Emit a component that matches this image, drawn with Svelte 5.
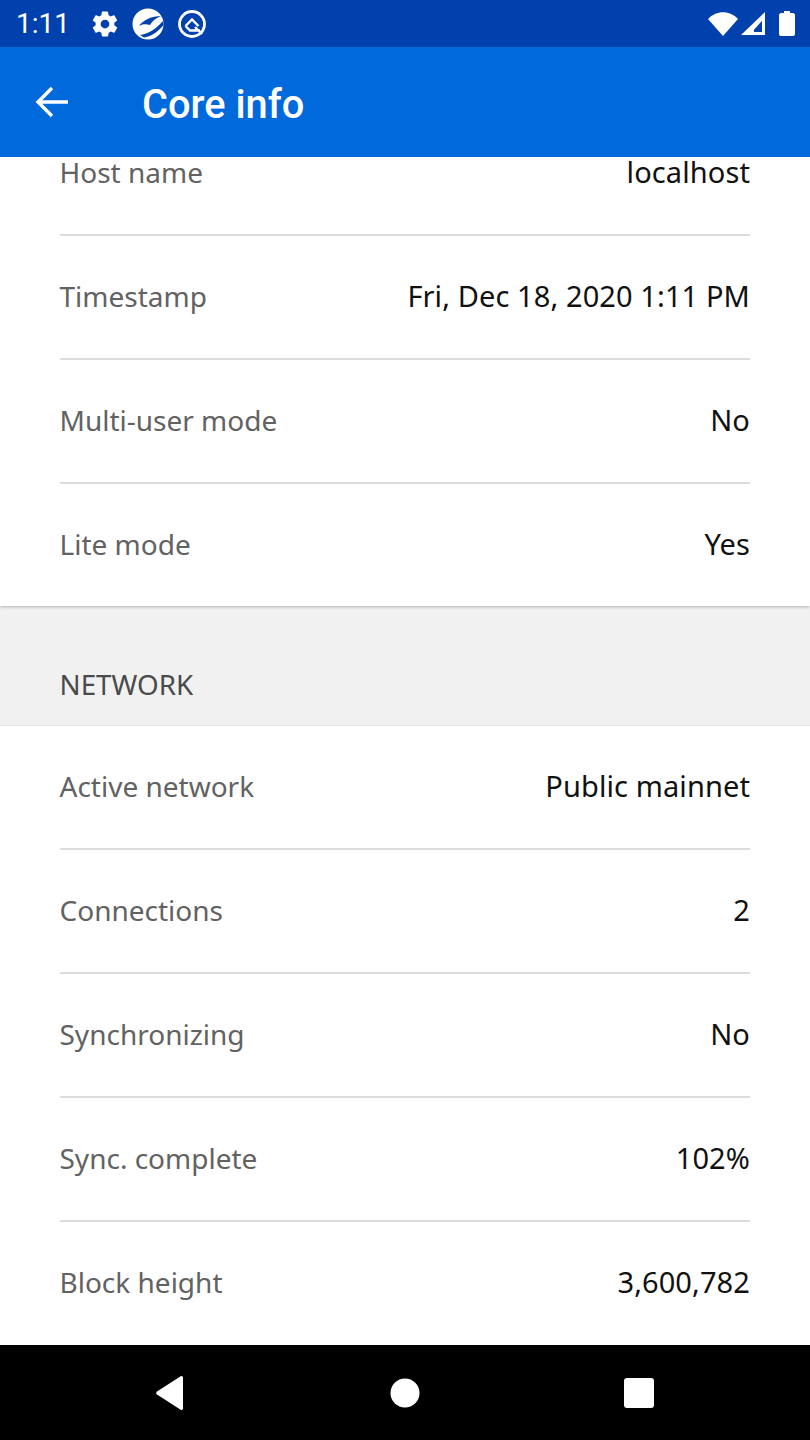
<script>
	const general = [
		['Timestamp', 'Fri, Dec 18, 2020 1:11 PM'],
		['Multi-user mode', 'No'],
		['Lite mode', 'Yes']
	];
	const network = [
		['Active network', 'Public mainnet'],
		['Connections', '2'],
		['Synchronizing', 'No'],
		['Sync. complete', '102%'],
		['Block height', '3,600,782']
	];
</script>

<div class="screen">
	<div class="status">
		<span class="time">1:11</span>
		<svg class="gear" width="30" height="30" viewBox="0 0 24 24" fill="#fff"><path fill-rule="evenodd" d="M19.4 13c.04-.3.1-.65.1-1s-.06-.7-.1-1l2.1-1.65c.2-.15.25-.42.12-.64l-2-3.46c-.12-.22-.4-.3-.6-.22l-2.5 1c-.5-.4-1.1-.7-1.7-1l-.4-2.65A.5.5 0 0 0 14 2h-4a.5.5 0 0 0-.5.42l-.37 2.65c-.63.25-1.17.6-1.7 1l-2.48-1a.5.5 0 0 0-.6.22l-2 3.46c-.13.22-.07.49.12.64L4.57 11c-.04.3-.07.65-.07 1s.03.7.07 1l-2.1 1.65a.5.5 0 0 0-.12.64l2 3.46c.12.22.4.3.6.22l2.48-1c.53.4 1.07.75 1.7 1l.37 2.65c.04.24.25.42.5.42h4c.25 0 .46-.18.5-.42l.37-2.65c.63-.25 1.17-.6 1.7-1l2.5 1c.2.08.48 0 .6-.22l2-3.46a.5.5 0 0 0-.12-.64zM12 15.500a3.500 3.500 0 1 1 0-7 3.500 3.500 0 0 1 0 7z"/></svg>
		<svg class="logo" width="32" height="32" viewBox="0 0 32 32"><circle cx="16" cy="16" r="15.500" fill="#fff"/><path d="M7 18C11 12 20 8 29 8C24 10 20 13 18 17C14 15.500 10 16 7 18Z" fill="#0041ad"/><path d="M8 27C16 26 24 21 31 13L31.500 17C26 24 18 29 12 29.500Z" fill="#0041ad"/></svg>
		<svg class="q" width="30" height="30" viewBox="0 0 30 30" fill="none" stroke="#fff"><circle cx="15" cy="15" r="12.500" stroke-width="2.800"/><path d="M8.500 17 15 10.500 21.500 17M8.500 17l4.500 4.500h10M18 18l7 7" stroke-width="2.400"/></svg>
		<span class="spacer"></span>
		<svg class="wifi" width="30" height="24" viewBox="0 0 30 24" fill="#fff"><path d="M0 7C8-2 22-2 30 7L15 24z"/></svg>
		<svg class="signal" width="24" height="23" viewBox="0 0 24 23" fill="#fff"><path fill-rule="evenodd" d="M24 0v23H0zM21 9l-8 9v2h8z"/><path d="M21 9l-8 9v2h8z" fill="#0041ad"/></svg>
		<svg class="battery" width="16" height="25" viewBox="0 0 16 25" fill="#fff"><path d="M5 0h6v2h3c1 0 2 1 2 2v19c0 1-1 2-2 2H2c-1 0-2-1-2-2V4c0-1 1-2 2-2h3z"/></svg>
	</div>
	<header class="bar">
		<svg width="33" height="32" viewBox="0 0 33 32" fill="none" stroke="#fff" stroke-width="3.400"><path d="M33 16H3M17 2 3 16l14 14"/></svg>
		<h1>Core info</h1>
	</header>
	<main class="content">
		<section class="card">
			<div class="row first">
				<span class="label">Host name</span>
				<span class="value">localhost</span>
			</div>
			{#each general as [label, value], i}
				<div class="row" class:last={i === general.length - 1}>
					<span class="label">{label}</span>
					<span class="value">{value}</span>
				</div>
			{/each}
		</section>
		<div class="section-head">NETWORK</div>
		<section class="card net">
			{#each network as [label, value], i}
				<div class="row" class:last={i === network.length - 1}>
					<span class="label">{label}</span>
					<span class="value">{value}</span>
				</div>
			{/each}
		</section>
	</main>
	<nav class="navbar">
		<svg width="30" height="34" viewBox="0 0 30 34" fill="#fff"><path d="M28 1.500V32.500a1.500 1.500 0 0 1-2.300 1.200L2 18.500a1.800 1.800 0 0 1 0-3L25.700.3A1.500 1.500 0 0 1 28 1.500z"/></svg>
		<svg width="30" height="30" viewBox="0 0 30 30" fill="#fff"><circle cx="15" cy="15" r="14.500"/></svg>
		<svg width="30" height="30" viewBox="0 0 30 30" fill="#fff"><rect width="30" height="30" rx="3"/></svg>
	</nav>
</div>

<style>
	:global(body) {
		margin: 0;
	}

	.screen {
		width: 810px;
		height: 1440px;
		display: flex;
		flex-direction: column;
		overflow: hidden;
		font-family: 'Noto Sans', 'Open Sans', sans-serif;
		background: #fff;
	}

	.status {
		height: 47px;
		flex: none;
		background: #0041ad;
		display: flex;
		align-items: center;
		padding: 0 15px 0 16px;
		box-sizing: border-box;
		color: #fff;
		font-family: Roboto, sans-serif;
	}

	.time {
		font-size: 28px;
		width: 74px;
	}

	.gear {
		margin-right: 12px;
	}

	.logo {
		margin-right: 13px;
	}

	.spacer {
		flex: 1;
	}

	.wifi {
		margin-right: 3px;
	}

	.signal {
		margin-right: 14px;
	}

	.bar {
		height: 110px;
		flex: none;
		background: #0069dc;
		display: flex;
		align-items: center;
		padding-left: 35px;
		gap: 74px;
		color: #fff;
		font-family: Roboto, sans-serif;
	}

	h1 {
		margin: 5px 0 0;
		font-size: 39.8px;
		font-weight: 500;
		line-height: 48px;
	}

	.content {
		flex: 1;
		min-height: 0;
		overflow: hidden;
		background: #fff;
	}

	.card {
		position: relative;
		background: #fff;
		padding: 0 60px 0 59.5px;
		box-shadow: 0 1px 3px rgba(0, 0, 0, 0.25);
	}

	.card.net {
		box-shadow: none;
	}

	.row {
		padding-bottom: 2px;
		box-sizing: border-box;
		height: 124px;
		display: flex;
		justify-content: space-between;
		align-items: center;
		border-bottom: 2px solid #dcdcdc;
		font-size: 28px;
		line-height: 40px;
	}

	.row.first {
		height: 79px;
		padding-bottom: 0;
		align-items: flex-start;
		line-height: 30px;
	}

	.row.last {
		height: 122px;
		padding-bottom: 3px;
		border-bottom: 0;
	}

	.label {
		color: #626262;
	}

	.value {
		color: #111;
		font-size: 29px;
		letter-spacing: 0.1px;
	}

	.section-head {
		height: 120px;
		box-sizing: border-box;
		padding: 58px 60px 0 59.5px;
		font-size: 27.8px;
		line-height: 40px;
		color: #4a4a4a;
		background: #f1f1f1;
		border-bottom: 1px solid #e4e4e4;
	}

	.navbar {
		height: 95px;
		flex: none;
		background: #000;
		display: flex;
		align-items: center;
		justify-content: space-between;
		padding: 0 156px 0 155px;
	}
</style>
